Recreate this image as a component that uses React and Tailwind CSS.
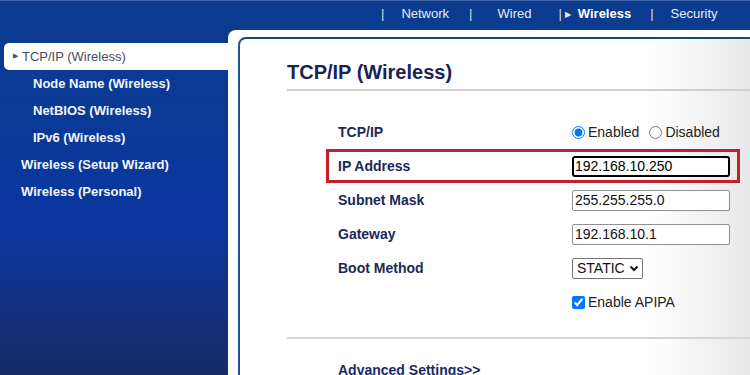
import React from 'react';

const sideItems = [
  { label: 'Node Name (Wireless)', sub: true },
  { label: 'NetBIOS (Wireless)', sub: true },
  { label: 'IPv6 (Wireless)', sub: true },
  { label: 'Wireless (Setup Wizard)', sub: false },
  { label: 'Wireless (Personal)', sub: false },
];

function Row({ label, boxed, children }) {
  return (
    <div
      className={
        'flex items-center h-[34px] w-[414px] border-[3px] pl-[9px] ' +
        (boxed ? 'border-[#c0212b]' : 'border-transparent')
      }
    >
      <div className="w-[234px] font-bold text-[14px] text-[#1c2858]">{label}</div>
      <div className="flex items-center">{children}</div>
    </div>
  );
}

function TopNav() {
  return (
    <div className="h-[30px] border-t border-[#3f66ad]">
      <div className="h-[26px] flex items-center text-[13px] text-[#e6ecf7]">
        <span className="ml-[381px] text-[#d6def0]">|</span>
        <span className="ml-[17px]">Network</span>
        <span className="ml-[20px] text-[#d6def0]">|</span>
        <span className="ml-[25px]">Wired</span>
        <span className="ml-[27px] text-[#d6def0]">|</span>
        <span className="ml-[3px] text-[8px] leading-none pt-[2px]">▶</span>
        <span className="ml-[7px] font-bold text-white">Wireless</span>
        <span className="ml-[19px] text-[#d6def0]">|</span>
        <span className="ml-[17px]">Security</span>
      </div>
    </div>
  );
}

function Sidebar() {
  return (
    <div className="w-[228px] pt-[13px] shrink-0">
      <div className="ml-[4px] h-[27px] bg-white rounded-l-[5px] flex items-center text-[13px] text-[#4a4d5e]">
        <span className="ml-[9px] text-[7px] mr-[4px]">▶</span>
        <span>TCP/IP (Wireless)</span>
      </div>
      {sideItems.map((it) => (
        <div
          key={it.label}
          className={
            'h-[27px] flex items-center text-[13px] font-bold text-[#f2f5fb] ' +
            (it.sub ? 'pl-[33px]' : 'pl-[21px]')
          }
        >
          {it.label}
        </div>
      ))}
    </div>
  );
}

export default function App() {
  return (
    <div
      className="w-[750px] h-[375px] overflow-hidden bg-gradient-to-b from-[#0b3c8d] via-[#0a36a0] via-60% to-[#172b68]"
      style={{ fontFamily: '"Liberation Sans", Arial, sans-serif' }}
    >
      <TopNav />
      <div className="flex h-[345px]">
        <Sidebar />
        <div className="flex-1 bg-white rounded-tl-[8px] pl-[10px] pt-[7px]">
          <div className="h-full border-l-2 border-t-2 border-l-[#1e5597] border-t-[#1b4a62] rounded-tl-[8px] bg-gradient-to-r from-white via-white via-80% to-[#e8e8e8]">
            <div className="ml-[47px] pt-[20px] pb-[4px] border-b-2 border-[#cfcfcf]">
              <h1 className="text-[20px] font-bold text-[#1a2452] leading-[26px]">TCP/IP (Wireless)</h1>
            </div>
            <div className="ml-[86px] mt-[24px]">
              <Row label="TCP/IP">
                <label className="flex items-center text-[14px] text-[#222]">
                  <input type="radio" name="tcp" defaultChecked className="m-0 w-[13px] h-[13px] accent-[#0075ff]" />
                  <span className="ml-[3px]">Enabled</span>
                </label>
                <label className="flex items-center text-[14px] text-[#222] ml-[10px]">
                  <input type="radio" name="tcp" className="m-0 w-[13px] h-[13px]" />
                  <span className="ml-[3px]">Disabled</span>
                </label>
              </Row>
              <Row label="IP Address" boxed>
                <div className="w-[158px] h-[21px] bg-white border-2 border-black rounded-[3px] flex items-center pl-[1px] text-[14px] text-black">
                  192.168.10.250
                </div>
              </Row>
              <Row label="Subnet Mask">
                <div className="w-[158px] h-[21px] bg-white border border-[#8f8f8f] rounded-[2px] flex items-center pl-[2px] text-[14px] text-[#111]">
                  255.255.255.0
                </div>
              </Row>
              <Row label="Gateway">
                <div className="w-[158px] h-[21px] bg-white border border-[#8f8f8f] rounded-[2px] flex items-center pl-[2px] text-[14px] text-[#111]">
                  192.168.10.1
                </div>
              </Row>
              <Row label="Boot Method">
                <div className="w-[71px] h-[21px] border border-[#767676] rounded-[2px] bg-white flex items-center pl-[4px] text-[14px] text-[#111]">
                  <span>STATIC</span>
                  <svg width="10" height="7" viewBox="0 0 10 7" className="ml-[4px]">
                    <path d="M1.5 1.5 L5 5 L8.5 1.5" fill="none" stroke="#111" strokeWidth="2" />
                  </svg>
                </div>
              </Row>
              <Row label="">
                <label className="flex items-center text-[14px] text-[#222]">
                  <input type="checkbox" defaultChecked className="m-0 w-[13px] h-[13px] accent-[#0075ff]" />
                  <span className="ml-[3px]">Enable APIPA</span>
                </label>
              </Row>
            </div>
            <div className="ml-[47px] mt-[18px] border-t-2 border-[#d4d4d4]" />
            <div className="ml-[98px] mt-[21px] text-[14px] font-bold text-[#1a2a6a]">Advanced Settings&gt;&gt;</div>
          </div>
        </div>
      </div>
    </div>
  );
}
